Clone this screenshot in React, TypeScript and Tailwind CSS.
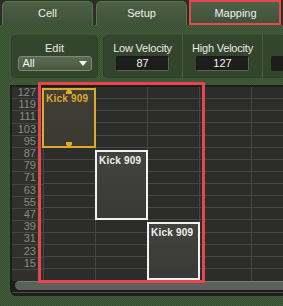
import React from "react";

const TABS = ["Cell", "Setup", "Mapping"];
const ROW_LABELS = ["127", "119", "111", "103", "95", "87", "79", "71", "63", "55", "47", "39", "31", "23", "15", ""];

const GREEN =
  "bg-[#3e5536] bg-[image:repeating-conic-gradient(#425b3a_0%_25%,#3a5033_0%_50%)] bg-[length:2px_2px]";

interface Zone {
  left: number;
  top: number;
  width: number;
  height: number;
  selected?: boolean;
}

const ZONES: Zone[] = [
  { left: -2, top: 1, width: 54, height: 60, selected: true },
  { left: 51, top: 63, width: 53, height: 70 },
  { left: 103, top: 135, width: 53, height: 58 },
];

function ZoneBlock({ zone }: { zone: Zone }) {
  const sel = zone.selected;
  return (
    <div
      className={`absolute border-2 px-[2px] pt-[3px] ${
        sel
          ? "border-[#dcaa2e] bg-gradient-to-b from-[#423f35] to-[#3a3830] text-[#dcaa2e]"
          : "border-[#f2f2f2] bg-gradient-to-b from-[#42433f] to-[#393a37] text-[#f0f0f0]"
      }`}
      style={{ left: zone.left, top: zone.top, width: zone.width, height: zone.height }}
    >
      <div className="text-[10px] font-bold leading-[12px] tracking-[0.2px]">Kick 909</div>
      {sel ? (
        <>
          <svg className="absolute left-1/2 top-[-2px] -translate-x-1/2" width="8" height="6" viewBox="0 0 8 6">
            <path d="M4 0 L7 3.5 L7 6 L1 6 L1 3.5 Z" fill="#dcaa2e" />
          </svg>
          <svg className="absolute bottom-[-2px] left-1/2 -translate-x-1/2" width="8" height="6" viewBox="0 0 8 6">
            <path d="M1 0 L7 0 L7 2.5 L4 6 L1 2.5 Z" fill="#dcaa2e" />
          </svg>
        </>
      ) : null}
    </div>
  );
}

function ValueField({ label, value }: { label: string; value: string }) {
  return (
    <div className="flex w-[80px] shrink-0 flex-col items-center border-r border-[#4b5c43] pt-[6px]">
      <div className="text-[11px] leading-[14px] tracking-[-0.2px] text-[#ececec]">{label}</div>
      <div className="mt-[1px] flex h-[15px] w-[53px] items-center justify-center rounded-[2px] border border-[#1a1b18] border-b-[#5a6352] border-r-[#5a6352] bg-[#1d1e1b] text-[11px] text-[#f0f0f0]">
        {value}
      </div>
    </div>
  );
}

export default function App() {
  return (
    <div
      className="relative h-[306px] w-[283px] overflow-hidden bg-[#283024] text-[#ececec]"
      style={{ fontFamily: '"Liberation Sans", Arial, sans-serif' }}
    >
      {/* tabs */}
      <div className="flex h-[25px] gap-[3px] px-[2px] pt-[1px]">
        {TABS.map((tab) => (
          <div
            key={tab}
            className="w-[91px] rounded-t-[5px] border border-b-0 border-[#5f7055] bg-gradient-to-b from-[#4d6045] to-[#3e5237] text-center text-[11px] leading-[23px] text-[#eeeeee]"
          >
            {tab}
          </div>
        ))}
      </div>

      {/* panel */}
      <div className={`flex h-[281px] flex-col ${GREEN}`}>
        <div className="mt-[10px] flex h-[43px] gap-[5px] pl-[11px]">
          <div className="flex w-[87px] shrink-0 flex-col items-center rounded-[5px] bg-[#33452d] pt-[6px] shadow-[inset_0_0_0_1px_#2f4029]">
            <div className="text-[11px] leading-[14px] text-[#ececec]">Edit</div>
            <div className="mt-[1px] flex h-[15px] w-[74px] items-center justify-between rounded-[3px] border border-[#7c8a74] bg-gradient-to-b from-[#5c6c54] to-[#48593f] px-[4px]">
              <span className="text-[11px] leading-none text-[#f4f4f4]">All</span>
              <svg width="8" height="5" viewBox="0 0 8 5">
                <path d="M0 0 H8 L4 5 Z" fill="#f4f4f4" />
              </svg>
            </div>
          </div>
          <div className="flex w-[200px] shrink-0 rounded-l-[5px] bg-[#33452d] shadow-[inset_0_0_0_1px_#2f4029]">
            <ValueField label="Low Velocity" value="87" />
            <ValueField label="High Velocity" value="127" />
            <div className="pl-[8px] pt-[21px]">
              <div className="h-[15px] w-[30px] rounded-[2px] bg-[#1d1e1b]" />
            </div>
          </div>
        </div>

        {/* grid frame */}
        <div className="ml-[10px] mt-[7px] flex h-[211px] flex-col rounded-bl-[6px] bg-[#1c1e1a] pl-[2px] pt-[2px]">
          <div className="flex h-[194px] bg-[#2c2d2a]">
            <div className="flex w-[32px] shrink-0 flex-col border-r border-[#464743] bg-[#2f302d]">
              {ROW_LABELS.map((label, i) => (
                <div
                  key={i}
                  className={`flex flex-1 items-center justify-end pr-[7px] text-[11px] leading-none text-[#8a8b86] ${
                    i < ROW_LABELS.length - 1 ? "border-b border-[#464743]" : ""
                  }`}
                >
                  {label}
                </div>
              ))}
            </div>
            <div className="relative flex-1">
              <div className="grid h-full grid-cols-[repeat(4,52px)_1fr] grid-rows-[repeat(16,minmax(0,1fr))]">
                {Array.from({ length: 80 }).map((_, i) => (
                  <div
                    key={i}
                    className={`border-[#464743] ${i % 5 < 4 ? "border-r" : ""} ${i < 75 ? "border-b" : ""}`}
                  />
                ))}
              </div>
              {ZONES.map((zone, i) => (
                <ZoneBlock key={i} zone={zone} />
              ))}
            </div>
          </div>
          {/* scrollbar */}
          <div className="ml-[3px] h-[9px] rounded-l-full border-t border-[#767b75] bg-[#5b605a]" />
          <div className="mt-[2px] h-px bg-[#4a4e48]" />
        </div>
      </div>

      {/* annotation outlines */}
      <div className="pointer-events-none absolute left-[189px] top-0 h-[25px] w-[92px] border-2 border-[#e9454d]" />
      <div className="pointer-events-none absolute left-[38px] top-[82px] h-[201px] w-[167px] border-[3px] border-[#e9454d]" />
    </div>
  );
}
